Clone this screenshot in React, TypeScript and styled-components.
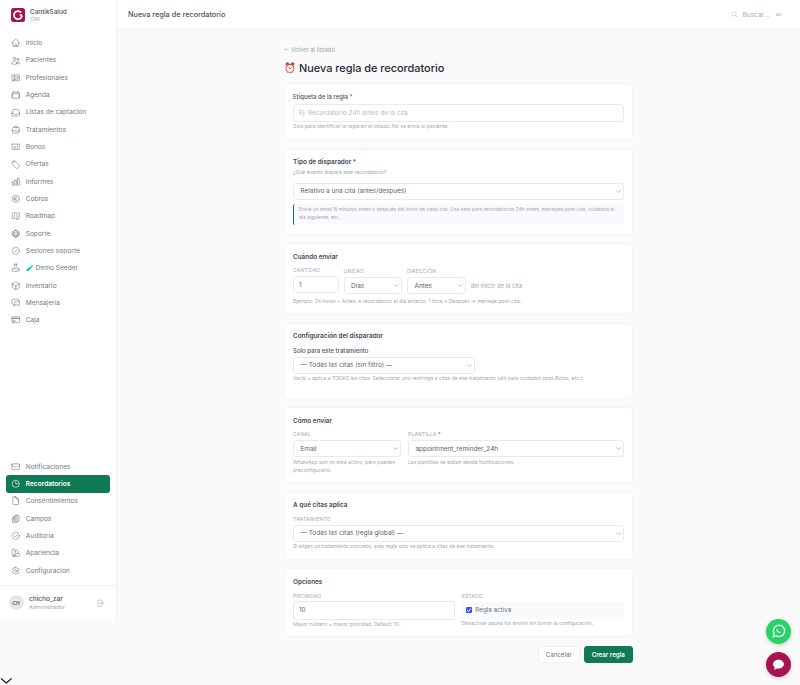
import React from "react";
import styled, { createGlobalStyle } from "styled-components";
import { ArrowLeft, ChevronDown } from "lucide-react";
import {
  HiOutlineHome, HiOutlineUsers, HiOutlineIdentification, HiOutlineCalendar, HiOutlineInbox,
  HiOutlineBriefcase, HiOutlineTicket, HiOutlineTag, HiOutlineChartBar, HiOutlineCurrencyEuro,
  HiOutlineMap, HiOutlineGlobeAlt, HiOutlineCheckBadge, HiOutlineBeaker, HiOutlineCube,
  HiOutlineChatBubbleLeftRight, HiOutlineCreditCard, HiOutlineEnvelope, HiOutlineClock,
  HiOutlineDocument, HiOutlineClipboardDocumentList, HiOutlineSwatch, HiOutlineCog6Tooth,
  HiOutlineArrowRightOnRectangle, HiOutlineMagnifyingGlass,
} from "react-icons/hi2";

const Global = createGlobalStyle`
  html, body { margin: 0; padding: 0; background: #fafafb; }
  body { font-family: Inter, "Liberation Sans", sans-serif; color: #1f2937; }
  * { box-sizing: border-box; }
`;

const Shell = styled.div`
  display: flex;
  width: 800px;
  height: 685px;
  overflow: hidden;
  align-items: flex-start;
`;
const Sidebar = styled.aside`
  width: 117px;
  height: 620px;
  flex: none;
  background: #fff;
  border-right: 1px solid #eef0f2;
  display: flex;
  flex-direction: column;
`;
const Brand = styled.div`
  height: 30px;
  display: flex;
  align-items: center;
  gap: 5px;
  padding: 0 11px;
`;
const BrandText = styled.div`
  display: flex;
  flex-direction: column;
  gap: 1px;
`;
const BrandName = styled.span`
  font-size: 6.4px;
  font-weight: 500;
  color: #4b5563;
  line-height: 8px;
`;
const BrandSub = styled.span`
  font-size: 4.2px;
  color: #a3a9b3;
  line-height: 5px;
`;
const NavGroup = styled.nav<{ $top: number }>`
  display: flex;
  flex-direction: column;
  padding: 0 6px;
  margin-top: ${(p) => p.$top}px;
`;
const NavItem = styled.div<{ $active?: boolean }>`
  height: 17.33px;
  display: flex;
  align-items: center;
  gap: 5.7px;
  padding: 0 4.5px;
  font-size: 6.6px;
  border-radius: 3px;
  color: ${(p) => (p.$active ? "#fff" : "#737985")};
  background: ${(p) => (p.$active ? "#0f7a54" : "transparent")};
  font-weight: ${(p) => (p.$active ? 600 : 400)};
  svg { width: 9.5px; height: 9.5px; flex: none; color: ${(p) => (p.$active ? "#fff" : "#737985")}; }
`;
const UserRow = styled.div`
  margin-top: auto;
  height: 35.5px;
  border-top: 1px solid #eef0f2;
  display: flex;
  align-items: center;
  padding: 0 8.5px;
  gap: 5.5px;
  svg { width: 8.5px; height: 8.5px; color: #a3a9b3; margin-left: auto; margin-right: 3px; }
`;
const Avatar = styled.div`
  width: 15px;
  height: 15px;
  border-radius: 50%;
  background: #e5e7eb;
  color: #4b5563;
  font-size: 5px;
  font-weight: 600;
  display: flex;
  align-items: center;
  justify-content: center;
`;
const UserText = styled.div`
  display: flex;
  flex-direction: column;
  gap: 0;
`;
const UserName = styled.span`
  font-size: 6.5px;
  font-weight: 500;
  color: #4b5563;
  line-height: 8px;
`;
const UserRole = styled.span`
  font-size: 5.4px;
  color: #a3a9b3;
  line-height: 8px;
`;

const Main = styled.main`
  flex: 1;
  display: flex;
  flex-direction: column;
  min-width: 0;
`;
const Topbar = styled.header`
  height: 30px;
  background: #fff;
  border-bottom: 1px solid #f0f1f3;
  display: flex;
  align-items: center;
  justify-content: space-between;
  padding: 0 18.5px 0 11px;
  font-size: 7.3px;
  font-weight: 500;
  color: #4b5563;
`;
const SearchBox = styled.div`
  display: flex;
  align-items: center;
  gap: 4px;
  font-size: 6.6px;
  font-weight: 400;
  color: #a3a9b3;
  svg { width: 7px; height: 7px; }
`;
const Kbd = styled.span`
  font-size: 3.6px;
  margin-left: 2px;
`;
const Column = styled.div`
  width: 348.5px;
  margin-left: 167px;
  display: flex;
  flex-direction: column;
`;
const Back = styled.div`
  margin-top: 15px;
  height: 8px;
  display: flex;
  align-items: center;
  gap: 2px;
  font-size: 5.9px;
  color: #9ca3af;
  svg { width: 5px; height: 5px; }
`;
const Title = styled.h1`
  margin: 9px 0 9px;
  height: 12px;
  display: flex;
  align-items: center;
  gap: 3px;
  font-size: 10.9px;
  line-height: 12px;
  font-weight: 500;
  color: #1f2937;
  white-space: nowrap;
`;
const TitleEmoji = styled.span`
  font-size: 9.6px;
  width: 12px;
  flex: none;
`;
const Card = styled.section<{ $h: number }>`
  height: ${(p) => p.$h}px;
  flex: none;
  margin-bottom: 8.5px;
  background: #fff;
  border: 1px solid #f3f4f6;
  border-radius: 4px;
  padding: 8.5px 8px 0;
  display: flex;
  flex-direction: column;
`;
const CardTitle = styled.div<{ $mb?: number }>`
  font-size: 6.4px;
  line-height: 8px;
  font-weight: 600;
  color: #414a57;
  margin-bottom: ${(p) => p.$mb ?? 6.8}px;
`;
const Req = styled.span`
  color: #e11d48;
`;
const Muted = styled.div<{ $mt?: number }>`
  font-size: 5.03px;
  line-height: 7.6px;
  color: #a3a9b3;
  margin-top: ${(p) => p.$mt ?? 1.6}px;
`;
const Label = styled.div<{ $mb?: number }>`
  font-size: 5px;
  line-height: 6px;
  color: #a3a9b3;
  letter-spacing: 0.2px;
  margin-bottom: ${(p) => p.$mb ?? 3}px;
  text-transform: uppercase;
`;
const Control = styled.div<{ $h?: number; $w?: number }>`
  height: ${(p) => p.$h ?? 17}px;
  flex: none;
  ${(p) => (p.$w ? `width: ${p.$w}px;` : "")}
  background: #fff;
  border: 1px solid #e8eaed;
  border-radius: 3px;
  display: flex;
  align-items: center;
  font-size: 6.4px;
  color: #5b6472;
`;
const InputBox = styled(Control)`
  padding: 0 5px;
`;
const SelectBox = styled(Control)`
  justify-content: space-between;
  padding: 0 1px 0 6.5px;
  svg { width: 7px; height: 7px; color: #6b7280; stroke-width: 1.6; }
`;
const Placeholder = styled.span`
  color: #b6bbc3;
`;
const Note = styled.div`
  margin-top: 4px;
  height: 21px;
  flex: none;
  border-left: 1.2px solid #0f7a54;
  border-radius: 2px;
  background: #f9fafb;
  padding: 2.5px 5px;
  font-size: 4.88px;
  line-height: 7.7px;
  color: #a3a9b3;
`;
const Row = styled.div<{ $gap: number; $mt?: number }>`
  display: flex;
  gap: ${(p) => p.$gap}px;
  margin-top: ${(p) => p.$mt ?? 0}px;
`;
const Field = styled.div<{ $w?: number; $grow?: boolean; $drop?: number }>`
  display: flex;
  flex-direction: column;
  ${(p) => (p.$w ? `width: ${p.$w}px; flex: none;` : "")}
  ${(p) => (p.$grow ? "flex: 1; min-width: 0;" : "")}
  ${(p) => (p.$drop ? `padding-top: ${p.$drop}px;` : "")}
`;
const Suffix = styled.span`
  font-size: 5.9px;
  color: #a3a9b3;
  align-self: flex-end;
  height: 17px;
  line-height: 17px;
`;
const SubLabel = styled.div<{ $mb: number }>`
  font-size: 6px;
  line-height: 8px;
  font-weight: 500;
  color: #4b5563;
  margin-bottom: ${(p) => p.$mb}px;
`;
const CheckBox = styled.div`
  height: 17px;
  flex: none;
  background: #f9fafb;
  border-radius: 3px;
  display: flex;
  align-items: center;
  gap: 3.5px;
  padding: 0 4px;
  font-size: 6.3px;
  color: #6b7280;
`;
const Tick = styled.span`
  width: 6px;
  height: 6px;
  border-radius: 1px;
  background: #2f5fd8;
  display: flex;
  align-items: center;
  justify-content: center;
  svg { width: 6px; height: 6px; }
`;
const Actions = styled.div`
  display: flex;
  justify-content: flex-end;
  gap: 4px;
  margin-top: 0.5px;
`;
const Button = styled.div<{ $primary?: boolean }>`
  height: 17px;
  border-radius: 3px;
  display: flex;
  align-items: center;
  justify-content: center;
  font-size: 6.2px;
  width: ${(p) => (p.$primary ? "48.5px" : "42.5px")};
  font-weight: ${(p) => (p.$primary ? 600 : 400)};
  color: ${(p) => (p.$primary ? "#fff" : "#6b7280")};
  background: ${(p) => (p.$primary ? "#0f7a54" : "#fff")};
  border: 1px solid ${(p) => (p.$primary ? "#0f7a54" : "#f0f1f3")};
`;
const Fab = styled.div<{ $bg: string; $top: number }>`
  position: fixed;
  left: 765.5px;
  top: ${(p) => p.$top}px;
  width: 25px;
  height: 25px;
  border-radius: 50%;
  background: ${(p) => p.$bg};
  box-shadow: 0 1px 4px rgba(0, 0, 0, 0.2);
  display: flex;
  align-items: center;
  justify-content: center;
`;
const Caret = styled.div`
  position: fixed;
  left: 0;
  bottom: 0;
  width: 13px;
  height: 8px;
  svg { display: block; }
`;

const top = [
  [HiOutlineHome, "Inicio"], [HiOutlineUsers, "Pacientes"], [HiOutlineIdentification, "Profesionales"],
  [HiOutlineCalendar, "Agenda"], [HiOutlineInbox, "Listas de captación"], [HiOutlineBriefcase, "Tratamientos"],
  [HiOutlineTicket, "Bonos"], [HiOutlineTag, "Ofertas"], [HiOutlineChartBar, "Informes"],
  [HiOutlineCurrencyEuro, "Cobros"], [HiOutlineMap, "Roadmap"], [HiOutlineGlobeAlt, "Soporte"],
  [HiOutlineCheckBadge, "Sesiones soporte"], [HiOutlineBeaker, "🧪 Demo Seeder"], [HiOutlineCube, "Inventario"],
  [HiOutlineChatBubbleLeftRight, "Mensajería"], [HiOutlineCreditCard, "Caja"],
] as const;
const bottom = [
  [HiOutlineEnvelope, "Notificaciones"], [HiOutlineClock, "Recordatorios"], [HiOutlineDocument, "Consentimientos"],
  [HiOutlineClipboardDocumentList, "Campos"], [HiOutlineCheckBadge, "Auditoría"], [HiOutlineSwatch, "Apariencia"],
  [HiOutlineCog6Tooth, "Configuración"],
] as const;

const Logo = () => (
  <svg width="14" height="14" viewBox="0 0 14 14">
    <rect width="14" height="14" rx="2.5" fill="#a8144f" />
    <path d="M9.6 4.2A4 4 0 1 0 10.8 8" fill="none" stroke="#fff" strokeWidth="1.7" strokeLinecap="round" />
    <path d="M8.6 7h2.4" stroke="#fff" strokeWidth="1.5" />
  </svg>
);

export default function App() {
  return (
    <>
      <Global />
      <Shell>
        <Sidebar>
          <Brand>
            <Logo />
            <BrandText>
              <BrandName>CantikSalud</BrandName>
              <BrandSub>CRM</BrandSub>
            </BrandText>
          </Brand>
          <NavGroup $top={4.3}>
            {top.map(([I, t]) => (
              <NavItem key={t}><I />{t}</NavItem>
            ))}
          </NavGroup>
          <NavGroup $top={129}>
            {bottom.map(([I, t]) => (
              <NavItem key={t} $active={t === "Recordatorios"}><I />{t}</NavItem>
            ))}
          </NavGroup>
          <UserRow>
            <Avatar>CH</Avatar>
            <UserText>
              <UserName>chicho_zar</UserName>
              <UserRole>Administrador</UserRole>
            </UserText>
            <HiOutlineArrowRightOnRectangle />
          </UserRow>
        </Sidebar>
        <Main>
          <Topbar>
            Nueva regla de recordatorio
            <SearchBox><HiOutlineMagnifyingGlass />Buscar...<Kbd>⌘K</Kbd></SearchBox>
          </Topbar>
          <Column>
            <Back><ArrowLeft />Volver al listado</Back>
            <Title><TitleEmoji>⏰</TitleEmoji>Nueva regla de recordatorio</Title>

            <Card $h={57}>
              <SubLabel $mb={3.5}>Etiqueta de la regla <Req>*</Req></SubLabel>
              <InputBox $h={17.5}><Placeholder>Ej: Recordatorio 24h antes de la cita</Placeholder></InputBox>
              <Muted>Solo para identificar la regla en el listado. No se envía al paciente.</Muted>
            </Card>

            <Card $h={86}>
              <CardTitle $mb={3}>Tipo de disparador <Req>*</Req></CardTitle>
              <Muted $mt={0}>¿Qué evento dispara este recordatorio?</Muted>
              <Row $gap={0} $mt={6}>
                <Field $grow><SelectBox>Relativo a una cita (antes/después)<ChevronDown /></SelectBox></Field>
              </Row>
              <Note>Envía un email N minutos antes o después del inicio de cada cita. Usa esto para recordatorios 24h antes, mensajes post-cita, cuidados el día siguiente, etc.</Note>
            </Card>

            <Card $h={71}>
              <CardTitle $mb={6.2}>Cuándo enviar</CardTitle>
              <Row $gap={5}>
                <Field $w={45.5}><Label $mb={3.6}>Cantidad</Label><InputBox>1</InputBox></Field>
                <Field $w={58.5} $drop={1.3}><Label $mb={3.2}>Unidad</Label><SelectBox $h={16.7}>Días<ChevronDown /></SelectBox></Field>
                <Field $w={58.5} $drop={1.3}><Label $mb={3.2}>Dirección</Label><SelectBox $h={16.7}>Antes<ChevronDown /></SelectBox></Field>
                <Suffix>del inicio de la cita</Suffix>
              </Row>
              <Muted $mt={3.7}>Ejemplo: 24 horas + Antes → recordatorio el día anterior. 1 hora + Después → mensaje post-cita.</Muted>
            </Card>

            <Card $h={76}>
              <CardTitle $mb={6.7}>Configuración del disparador</CardTitle>
              <SubLabel $mb={2.3}>Solo para este tratamiento</SubLabel>
              <SelectBox $w={182} $h={16.7}>— Todas las citas (sin filtro) —<ChevronDown /></SelectBox>
              <Muted>Vacío = aplica a TODAS las citas. Seleccionar uno restringe a citas de ese tratamiento (útil para cuidados post-Botox, etc.).</Muted>
            </Card>

            <Card $h={76}>
              <CardTitle>Cómo enviar</CardTitle>
              <Row $gap={7.3}>
                <Field $w={107.7}>
                  <Label>Canal</Label>
                  <SelectBox $h={16.5}>Email<ChevronDown /></SelectBox>
                  <Muted $mt={2.2}>WhatsApp aún no está activo, pero puedes preconfigurarlo.</Muted>
                </Field>
                <Field $grow>
                  <Label>Plantilla <Req>*</Req></Label>
                  <SelectBox $h={16.5}>appointment_reminder_24h<ChevronDown /></SelectBox>
                  <Muted $mt={2.2}>Las plantillas se editan desde Notificaciones.</Muted>
                </Field>
              </Row>
            </Card>

            <Card $h={68}>
              <CardTitle $mb={6.7}>A qué citas aplica</CardTitle>
              <Label>Tratamiento</Label>
              <SelectBox>— Todas las citas (regla global) —<ChevronDown /></SelectBox>
              <Muted $mt={1.8}>Si eliges un tratamiento concreto, esta regla solo se aplica a citas de ese tratamiento.</Muted>
            </Card>

            <Card $h={69}>
              <CardTitle $mb={7.2}>Opciones</CardTitle>
              <Row $gap={7}>
                <Field $grow>
                  <Label $mb={2.6}>Prioridad</Label>
                  <InputBox $h={18.4}>10</InputBox>
                  <Muted $mt={1.5}>Mayor número = mayor prioridad. Default: 10.</Muted>
                </Field>
                <Field $grow>
                  <Label $mb={3}>Estado</Label>
                  <CheckBox>
                    <Tick><svg viewBox="0 0 6 6"><path d="M1.2 3 2.6 4.4 4.8 1.6" fill="none" stroke="#fff" strokeWidth="1" /></svg></Tick>
                    Regla activa
                  </CheckBox>
                  <Muted $mt={1.5}>Desactivar pausa los envíos sin borrar la configuración.</Muted>
                </Field>
              </Row>
            </Card>

            <Actions>
              <Button>Cancelar</Button>
              <Button $primary>Crear regla</Button>
            </Actions>
          </Column>
        </Main>
        <Fab $bg="#25d366" $top={619}>
          <svg width="15" height="15" viewBox="0 0 24 24" fill="none" stroke="#fff" strokeWidth="2">
            <path d="M3.5 20.5 5 15.5A9 9 0 1 1 8.7 19Z" />
            <path d="M9 8c-.7.6-.7 2 .4 3.6 1.2 1.7 3 2.8 4.4 2.7 1-.1 1.5-.7 1.6-1.4l-1.7-.9-.8.8c-.8-.3-1.8-1.2-2.3-2.2l.7-.8L9.8 8Z" fill="#fff" stroke="none" />
          </svg>
        </Fab>
        <Fab $bg="#a8144f" $top={651.5}>
          <svg width="13" height="13" viewBox="0 0 24 24" fill="#fff">
            <path d="M12 3c5.5 0 10 3.7 10 8.3s-4.5 8.3-10 8.3c-1 0-2-.1-2.9-.4L4 22l1.1-4.500C3.2 16 2 13.8 2 11.3 2 6.7 6.500 3 12 3Z" />
          </svg>
        </Fab>
        <Caret>
          <svg width="13" height="8" viewBox="0 0 13 8" fill="none" stroke="#111" strokeWidth="1.1"><path d="M1 1.5 6.3 6 11.6 1.5" /></svg>
        </Caret>
      </Shell>
    </>
  );
}
